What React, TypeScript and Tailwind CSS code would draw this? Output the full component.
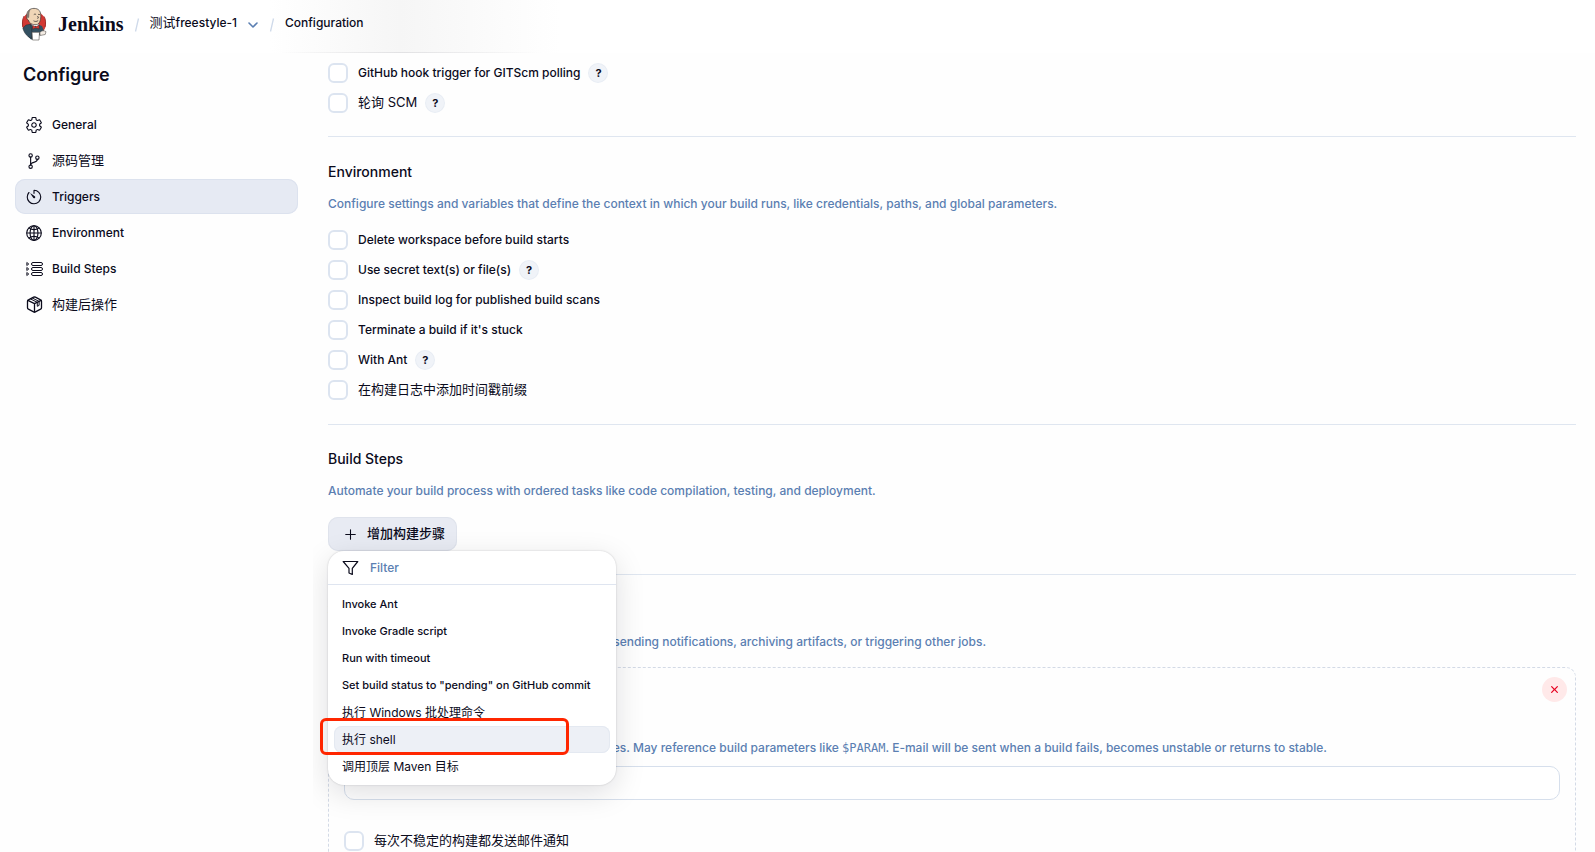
import type { ReactNode } from "react";
import {
  IoAdd,
  IoClose,
  IoGitBranchOutline,
  IoGlobeOutline,
  IoSettingsOutline,
  IoTimerOutline,
} from "react-icons/io5";

function JenkinsLogo() {
  return (
    <svg width="26" height="34" viewBox="0 0 26 34" aria-hidden="true">
      <circle cx="13" cy="16.5" r="12" fill="#d33833" />
      <path d="M3 9C1.500 12 1 16 1.800 20M23.200 9.500c1.500 3 1.800 7 .8 10.500" fill="none" stroke="#8d2a26" strokeWidth=".8" />
      <path d="M8 17.500 16 17l5 2 1.800 4.500-2.300 4-3.500 1.500-1 3.500h-6l-3-3z" fill="#335061" />
      <path d="M1.800 21 5 18l4.500-.8L11 25l-.5 6.500L7 29.500c-2.500-2-4.500-5-5.200-8.500z" fill="#335061" stroke="#231f20" strokeWidth=".4" />
      <path d="M5.800 8C6 3.800 9 1.400 13 1.400c4.800 0 7 3 6.800 8.100-.1 4-1.500 8.300-5 8.300-4 0-6.500-1.500-7.500-4.800C5.500 12.500 5.300 10 5.800 8z" fill="#f0d6b7" stroke="#3b3733" strokeWidth=".7" />
      <path d="M5.900 9c0-3.500 1.300-6.200 4-7-1 1.800-1.600 3-1.600 5.500l-.2 3-1.600.8z" fill="#81776f" />
      <path d="M12.800 7.600c.8-.6 1.600-.6 2.300 0M17 7.600c.6-.4 1.200-.4 1.900 0M16.600 9l.8 2-1 .5M12.500 13.800c1.500.9 3.200.9 4.700-.2" fill="none" stroke="#3b3733" strokeWidth=".8" />
      <path d="M10.500 17.500 13 21l1.500-2.500 2.500 2.700.8-4-3 .8z" fill="#fff" />
      <path d="m11.500 18.300 3.300 1.400 3.400-1.700v4l-3.400-1-3.300 1.200z" fill="#d33833" stroke="#231f20" strokeWidth=".4" />
      <path d="M11 25.300h7.500L18 33h-6.500z" fill="#fff" stroke="#55504c" strokeWidth=".6" />
      <path d="M18.800 25.500c1.800-2.200 4.500-2.200 6.200-.8l-.8 2.800-5 1z" fill="#f3ece4" stroke="#3b3733" strokeWidth=".5" />
    </svg>
  );
}

function StepsIcon() {
  return (
    <svg width="17" height="16" viewBox="0 0 17 16" fill="none" stroke="currentColor" aria-hidden="true">
      <rect x="5.500" y="1.500" width="11" height="3" rx="1.500" />
      <rect x="5.500" y="6.500" width="11" height="3" rx="1.500" />
      <rect x="5.500" y="11.500" width="11" height="3" rx="1.500" />
      <path d="M.8 1.500 2.800 3 .8 4.500zM.8 6.500 2.800 8 .8 9.500zM.8 11.500 2.800 13 .8 14.500z" strokeWidth=".9" />
    </svg>
  );
}

function PackageIcon() {
  return (
    <svg width="17" height="17" viewBox="0 0 17 17" fill="none" stroke="currentColor" strokeLinejoin="round" strokeLinecap="round" strokeWidth="1.300" aria-hidden="true">
      <path d="M7.600 1.200a2 2 0 0 1 1.800 0l5.200 2.600a1.500 1.500 0 0 1 .9 1.400v6.600a1.500 1.500 0 0 1-.9 1.400l-5.200 2.600a2 2 0 0 1-1.800 0l-5.200-2.600a1.500 1.500 0 0 1-.9-1.400V5.200a1.500 1.500 0 0 1 .9-1.400z" />
      <path d="M1.900 4.400 8.500 7.700l6.600-3.300M8.500 7.700V16" />
      <path d="m4.600 3 6.700 3.300v4l1.800-.9V5.400L6.500 2.100" strokeWidth="1" />
    </svg>
  );
}

function FunnelIcon() {
  return (
    <svg width="17" height="17" viewBox="0 0 17 17" fill="none" stroke="currentColor" strokeLinejoin="round" strokeWidth="1.200" aria-hidden="true">
      <path d="M1.200 2.500h14.600l-5.500 6.800v6.200L7 14V9.300z" />
    </svg>
  );
}

function ChevronIcon() {
  return (
    <svg width="12" height="8" viewBox="0 0 12 8" fill="none" stroke="currentColor" strokeLinecap="round" strokeLinejoin="round" strokeWidth="1.600" aria-hidden="true">
      <path d="m2 2 4 4 4-4" />
    </svg>
  );
}

function Slash() {
  return (
    <svg width="6" height="14" viewBox="0 0 6 14" className="mt-1" aria-hidden="true">
      <path d="M4.500.5 1.500 13.500" stroke="#cfdaea" strokeWidth="1.300" />
    </svg>
  );
}

// Han glyphs read smaller and darker than Latin ones at the same size
const isHan = (text: string) => /[\u4e00-\u9fff]/.test(text);

const navItems: { label: string; icon: ReactNode; active?: boolean }[] = [
  { label: "General", icon: <IoSettingsOutline size={18} /> },
  { label: "源码管理", icon: <IoGitBranchOutline size={18} /> },
  { label: "Triggers", icon: <IoTimerOutline size={18} />, active: true },
  { label: "Environment", icon: <IoGlobeOutline size={18} /> },
  { label: "Build Steps", icon: <StepsIcon /> },
  { label: "构建后操作", icon: <PackageIcon /> },
];

const triggers = [
  { id: "github-hook", label: "GitHub hook trigger for GITScm polling", help: true },
  { id: "poll-scm", label: "轮询 SCM", help: true },
];

const environment = [
  { id: "delete-ws", label: "Delete workspace before build starts" },
  { id: "secrets", label: "Use secret text(s) or file(s)", help: true },
  { id: "scans", label: "Inspect build log for published build scans" },
  { id: "terminate", label: "Terminate a build if it's stuck" },
  { id: "ant", label: "With Ant", help: true },
  { id: "timestamps", label: "在构建日志中添加时间戳前缀" },
];

const buildSteps = [
  "Invoke Ant",
  "Invoke Gradle script",
  "Run with timeout",
  'Set build status to "pending" on GitHub commit',
  "执行 Windows 批处理命令",
  "执行 shell",
  "调用顶层 Maven 目标",
];

function CheckRow({ id, label, help }: { id: string; label: string; help?: boolean }) {
  return (
    <div className="flex h-5 items-center">
      <input
        id={id}
        type="checkbox"
        className="size-5 shrink-0 appearance-none rounded-md border-2 border-[#dce4f0] bg-white"
      />
      <label htmlFor={id} className={isHan(label) ? "pl-2.5 text-[13px] font-normal" : "pl-2.5"}>
        {label}
      </label>
      {help && (
        <button
          type="button"
          aria-label={`Help for ${label}`}
          className="ml-[9px] flex size-[18px] shrink-0 items-center justify-center rounded-full bg-[#f0f3f8] text-[11px] font-bold ring ring-[#e8edf4]"
        >
          ?
        </button>
      )}
    </div>
  );
}

function SectionHead({ title, children }: { title: string; children: ReactNode }) {
  return (
    <>
      <h2 className="text-[14px] leading-5">{title}</h2>
      <p className="mt-3 leading-5 text-[#5b7fb2]">{children}</p>
    </>
  );
}

function StepMenu() {
  return (
    <div className="absolute top-full left-0 z-10 w-72 rounded-2xl bg-white shadow-[0_0_2px_rgba(0,0,20,0.2),0_8px_30px_rgba(0,0,20,0.13)]">
      <div className="flex h-[34px] items-center gap-[11px] border-b border-[#dfe5f0] px-3.5">
        <FunnelIcon />
        <input
          type="text"
          aria-label="Filter"
          placeholder="Filter"
          className="min-w-0 flex-1 bg-transparent outline-none placeholder:text-[#5b7fb2]"
        />
      </div>
      <ul className="px-1.5 pt-1.5 pb-[5px]">
        {buildSteps.map((step) => {
          const selected = step === "执行 shell";
          return (
            <li key={step} className={isHan(step) ? "relative text-[12px] font-normal" : "relative text-[11px]"}>
              <button
                type="button"
                className={
                  selected
                    ? "flex h-[27px] w-full items-center rounded-lg bg-[#edf0f6] px-2 whitespace-nowrap ring ring-[#e4e9f1] ring-inset"
                    : "flex h-[27px] w-full items-center px-2 whitespace-nowrap"
                }
              >
                {step}
              </button>
              {selected && (
                <span className="pointer-events-none absolute -top-2 -bottom-0.5 -left-3.5 w-[249px] rounded-md border-3 border-[#ff2600]" />
              )}
            </li>
          );
        })}
      </ul>
    </div>
  );
}

export default function App() {
  return (
    <div className="flex h-screen flex-col overflow-hidden bg-[#fefefe] font-['Inter','Noto_Sans_CJK_SC',sans-serif] text-[12px] font-medium text-[#0b0b1c]">
      <header className="relative flex h-[53px] shrink-0 items-center bg-white bg-[linear-gradient(90deg,transparent_270px,#f6f6f6_400px,#fafafa_470px,transparent_560px)] pb-1.5 pl-[21px]">
        <a href="#home" className="flex items-center gap-[11px]">
          <JenkinsLogo />
          <span className="font-['Liberation_Serif',serif] text-[20px] font-bold">Jenkins</span>
        </a>
        <nav aria-label="Breadcrumb" className="ml-2.5 flex items-center gap-2.5 pb-0.5">
          <Slash />
          <a href="#job">
            <span className="text-[13px] font-normal">测试</span>freestyle-1
          </a>
          <button type="button" aria-label="Job menu" className="pt-1 text-[#5b7fb2]">
            <ChevronIcon />
          </button>
          <Slash />
          <span>Configuration</span>
        </nav>
        <div className="absolute bottom-0 left-0 h-px w-[540px] bg-[linear-gradient(90deg,transparent_280px,#e2e2e4_400px,transparent)]" />
      </header>

      <div className="flex min-h-0 flex-1">
        <aside className="w-[313px] shrink-0 pr-[15px] pl-[15px]">
          <h1 className="pt-2.5 pl-2 text-[18px] leading-6 font-semibold">Configure</h1>
          <nav aria-label="Sections" className="mt-5 flex flex-col gap-px">
            {navItems.map((item) => (
              <a
                key={item.label}
                href={`#${item.label}`}
                className={
                  item.active
                    ? "flex h-[35px] items-center gap-[9px] rounded-[10px] bg-[#e6eaf3] px-2.5 ring ring-[#dce2ee] ring-inset"
                    : "flex h-[35px] items-center gap-[9px] px-2.5"
                }
              >
                <span className="flex w-[18px] justify-center">{item.icon}</span>
                <span className={isHan(item.label) ? "text-[13px] font-normal" : ""}>{item.label}</span>
              </a>
            ))}
          </nav>
        </aside>

        <main className="min-w-0 flex-1 overflow-hidden pt-2.5 pr-[19px] pl-[15px]">
          <div className="flex flex-col gap-2.5">
            {triggers.map((row) => (
              <CheckRow key={row.id} {...row} />
            ))}
          </div>
          <hr className="mt-[23px] mb-[25px] border-[#dfe6f0]" />

          <SectionHead title="Environment">
            Configure settings and variables that define the context in which your build runs, like
            credentials, paths, and global parameters.
          </SectionHead>
          <div className="mt-4 flex flex-col gap-2.5">
            {environment.map((row) => (
              <CheckRow key={row.id} {...row} />
            ))}
          </div>
          <hr className="my-6 border-[#dfe6f0]" />

          <SectionHead title="Build Steps">
            Automate your build process with ordered tasks like code compilation, testing, and
            deployment.
          </SectionHead>
          <div className="relative mt-4 w-fit">
            <button
              type="button"
              className="flex h-[34px] items-center gap-2 rounded-[10px] bg-[#e8ebf3] pr-3 pl-3.5 text-[13px] ring ring-[#dfe3ec] ring-inset"
            >
              <IoAdd size={17} />
              增加构建步骤
            </button>
            <StepMenu />
          </div>
          <hr className="mt-[23px] mb-[25px] border-[#dfe6f0]" />

          <SectionHead title="构建后操作">
            Define what happens after a build completes, like sending notifications, archiving
            artifacts, or triggering other jobs.
          </SectionHead>
          <section className="relative mt-[15px] rounded-[10px] border border-dashed border-[#d3dae6] px-[15px] pt-3 pb-10">
            <button
              type="button"
              aria-label="Remove"
              className="absolute top-[9px] right-2 flex size-[25px] items-center justify-center rounded-full bg-[#ffe9e9] text-[#e6001f]"
            >
              <IoClose size={13} />
            </button>
            <h3 className="leading-5">E-mail Notification</h3>
            <label htmlFor="recipients" className="mt-2 block leading-5">
              Recipients
            </label>
            <p className="mt-2.5 leading-5 text-[#5b7fb2]">
              Whitespace-separated list of recipient addresses. May reference build parameters like{" "}
              <code className="font-['DejaVu_Sans_Mono',monospace]">$PARAM</code>. E-mail will be
              sent when a build fails, becomes unstable or returns to stable.
            </p>
            <input
              id="recipients"
              type="text"
              className="mt-2 mb-[31px] block h-[34px] w-full rounded-[10px] border border-[#d6dfec] bg-white px-3"
            />
            <CheckRow id="unstable" label="每次不稳定的构建都发送邮件通知" />
          </section>
        </main>
      </div>
    </div>
  );
}
